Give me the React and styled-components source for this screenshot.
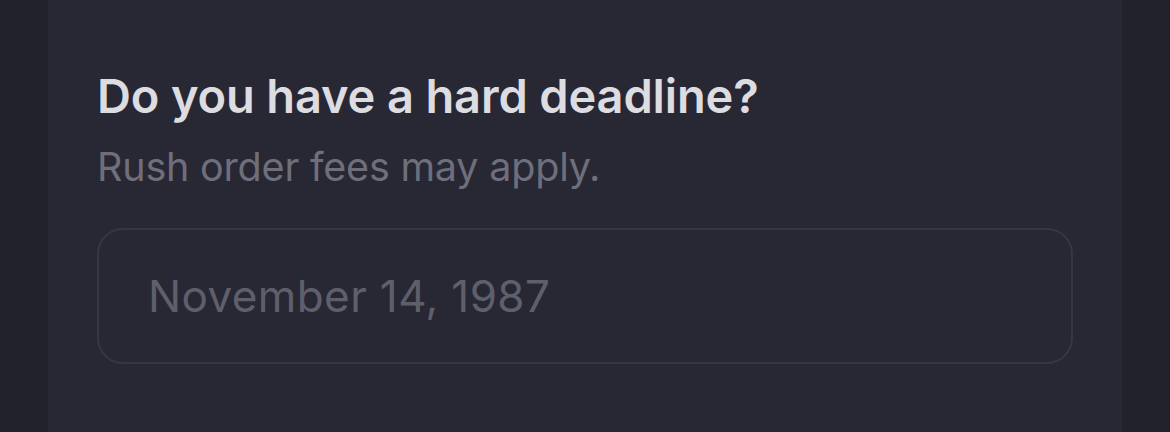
import React from 'react';
import styled, { createGlobalStyle } from 'styled-components';

const GlobalStyle = createGlobalStyle`
  html, body {
    margin: 0;
    padding: 0;
    background: #22222d;
  }
  body {
    font-family: Inter, "Noto Sans", sans-serif;
    -webkit-font-smoothing: antialiased;
  }
`;

const Page = styled.div`
  width: 1170px;
  height: 432px;
  overflow: hidden;
  padding: 0 48px;
  box-sizing: border-box;
  background: #22222d;
`;

const Panel = styled.section`
  height: 100%;
  background: #282835;
  padding: 68px 49px 0;
  box-sizing: border-box;
`;

const Question = styled.h2`
  margin: 0;
  font-size: 47px;
  line-height: 56px;
  font-weight: 600;
  color: #dcdce1;
  letter-spacing: -0.15px;
`;

const Hint = styled.p`
  margin: 19px 0 0;
  font-size: 39.5px;
  line-height: 48px;
  font-weight: 400;
  color: #6f6f7b;
  letter-spacing: -0.2px;
`;

const DateField = styled.input`
  display: block;
  margin-top: 37px;
  width: 976px;
  height: 136px;
  box-sizing: border-box;
  padding: 0 49px;
  background: transparent;
  border: 2px solid #363644;
  border-radius: 26px;
  font-family: inherit;
  font-size: 44px;
  letter-spacing: 0.4px;
  color: #dcdce1;
  outline: none;

  &::placeholder {
    color: #5f5f6c;
  }
`;

export default function App() {
  return (
    <>
      <GlobalStyle />
      <Page>
        <Panel>
          <Question>Do you have a hard deadline?</Question>
          <Hint>Rush order fees may apply.</Hint>
          <DateField type="text" placeholder="November 14, 1987" />
        </Panel>
      </Page>
    </>
  );
}
